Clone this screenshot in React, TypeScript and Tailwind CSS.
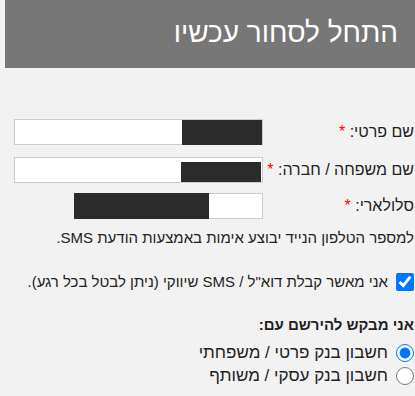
import React from 'react'

const font = { fontFamily: '"Liberation Sans", "DejaVu Sans", sans-serif' }

function Field({
  label,
  inputWidth,
  mt,
  redact,
}: {
  label: string
  inputWidth: string
  mt: string
  redact: string
}) {
  return (
    <div className={`flex items-center ${mt}`}>
      <label className="w-[151px] shrink-0 text-[16px] text-[#222]">
        {label} <span className="text-[#ff0000]">*</span>
      </label>
      <div className={`relative h-[26px] ${inputWidth} border border-[#cccccc] bg-white`}>
        {/* redacted value */}
        <div className={`absolute bg-[#2b2b2b] ${redact}`} />
      </div>
    </div>
  )
}

export default function App() {
  return (
    <div dir="rtl" style={font} className="w-[415px] h-[396px] overflow-hidden bg-[#f2f2f2]">
      <div className="w-[410px]">
        <div className="flex h-[68px] items-center bg-[#777777] pr-[17px] pb-[2px]">
          <h1 className="text-[28px] text-white">התחל לסחור עכשיו</h1>
        </div>

        <div className="pr-[1px]">
          <Field
            label="שם פרטי:"
            inputWidth="w-[249px]"
            mt="mt-[51px]"
            redact="top-0 -bottom-[1px] right-0 w-[80px]"
          />
          <Field
            label="שם משפחה / חברה:"
            inputWidth="w-[249px]"
            mt="mt-[12px]"
            redact="top-[4px] bottom-0 right-[1px] w-[80px]"
          />
          <Field
            label="סלולארי:"
            inputWidth="w-[189px]"
            mt="mt-[10px]"
            redact="-top-[1px] -bottom-[1px] -left-[1px] w-[135px]"
          />

          <p className="mt-[8px] text-[15px] leading-[22px] text-[#222]">
            למספר הטלפון הנייד יבוצע אימות באמצעות הודעת SMS.
          </p>

          <label className="mt-[22px] flex items-center gap-[8px] text-[15px] leading-[22px] text-[#222]">
            <input
              type="checkbox"
              defaultChecked
              className="m-0 h-[18px] w-[18px] shrink-0 accent-[#0075ff]"
            />
            <span className="whitespace-nowrap">אני מאשר קבלת דוא"ל / SMS שיווקי (ניתן לבטל בכל רגע).</span>
          </label>

          <p className="mt-[21px] text-[15px] font-bold leading-[22px] text-[#222]">
            אני מבקש להירשם עם:
          </p>

          <div className="mt-[8px] flex flex-col gap-[5px]">
            <label className="flex items-center gap-[8px] text-[17px] leading-[18px] text-[#222]">
              <input
                type="radio"
                name="account"
                defaultChecked
                className="m-0 h-[18px] w-[18px] shrink-0 accent-[#0075ff]"
              />
              <span>חשבון בנק פרטי / משפחתי</span>
            </label>
            <label className="flex items-center gap-[8px] text-[17px] leading-[18px] text-[#222]">
              <input
                type="radio"
                name="account"
                className="m-0 h-[18px] w-[18px] shrink-0 accent-[#0075ff]"
              />
              <span>חשבון בנק עסקי / משותף</span>
            </label>
          </div>
        </div>
      </div>
    </div>
  )
}
